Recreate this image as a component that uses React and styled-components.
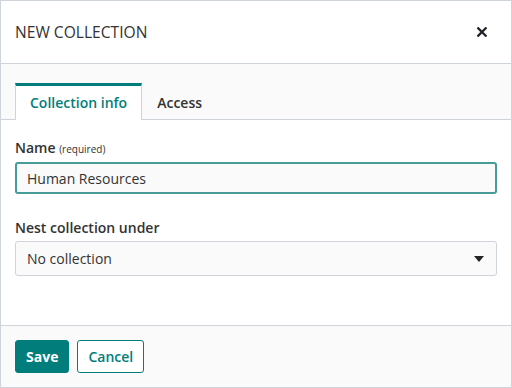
import React from "react";
import styled, { createGlobalStyle } from "styled-components";

const GlobalStyle = createGlobalStyle`
  html, body {
    margin: 0;
    padding: 0;
    background: #fff;
  }
  body {
    font-family: "Open Sans", "Liberation Sans", sans-serif;
    color: #333;
  }
  * { box-sizing: border-box; }
`;

const Modal = styled.div`
  width: 512px;
  height: 388px;
  border: 1px solid #ced4da;
  display: flex;
  flex-direction: column;
  background: #fff;
`;

const Header = styled.div`
  height: 63px;
  flex: none;
  display: flex;
  align-items: center;
  justify-content: space-between;
  padding: 0 23px 0 14px;
  border-bottom: 1px solid #ced4da;
`;

const Title = styled.h1`
  margin: 0;
  font-size: 15.6px;
  font-weight: 400;
  color: #333;
`;

const CloseButton = styled.button`
  border: none;
  background: none;
  padding: 0;
  width: 12px;
  height: 12px;
  display: flex;
  align-items: center;
  justify-content: center;
  color: #212529;
  cursor: pointer;
`;

const TabBar = styled.div`
  flex: none;
  background: #fafafa;
  border-bottom: 1px solid #ced4da;
  padding: 19px 14px 0;
  display: flex;
  height: 56px;
`;

const Tab = styled.div`
  padding: 0 14px 2px;
  display: flex;
  align-items: center;
  font-size: 14px;
  font-weight: 600;
  color: ${(p) => (p.$active ? "#017e7c" : "#333")};
  background: ${(p) => (p.$active ? "#fff" : "transparent")};
  border: 1px solid ${(p) => (p.$active ? "#ced4da" : "transparent")};
  border-top: 3px solid ${(p) => (p.$active ? "#017e7c" : "transparent")};
  border-bottom: none;
  margin-bottom: -1px;
`;

const Body = styled.div`
  flex: 1;
  padding: 18px 14px 0;
`;

const Field = styled.div`
  margin-bottom: 24px;
`;

const Label = styled.label`
  display: block;
  font-size: 14px;
  font-weight: 600;
  color: #333;
  margin-bottom: 3px;
  line-height: 20px;
`;

const Hint = styled.small`
  font-size: 10px;
  font-weight: 400;
  color: #333;
`;

const TextInput = styled.input`
  display: block;
  width: 482px;
  height: 32px;
  padding: 0 10px;
  font-family: inherit;
  font-size: 14px;
  color: #333;
  background: #fafafa;
  border: 2px solid #479b98;
  border-radius: 3px;
  outline: none;
`;

const Select = styled.div`
  width: 482px;
  height: 35px;
  padding: 0 12px 0 11px;
  display: flex;
  align-items: center;
  justify-content: space-between;
  font-size: 14px;
  color: #333;
  background: #fafafa;
  border: 1px solid #ced4da;
  border-radius: 3px;
`;

const Footer = styled.div`
  flex: none;
  height: 62px;
  background: #fafafa;
  border-top: 1px solid #ced4da;
  display: flex;
  align-items: center;
  gap: 8px;
  padding: 0 14px 0;
`;

const Button = styled.button`
  height: 33px;
  padding: 0 10px;
  font-family: inherit;
  font-size: 14px;
  border-radius: 3px;
  border: 1px solid #017e7c;
  background: ${(p) => (p.$primary ? "#017e7c" : "#fff")};
  color: ${(p) => (p.$primary ? "#fff" : "#017e7c")};
  font-weight: ${(p) => (p.$primary ? 700 : 600)};
  cursor: pointer;
`;

export default function App() {
  return (
    <>
      <GlobalStyle />
      <Modal>
        <Header>
          <Title>NEW COLLECTION</Title>
          <CloseButton aria-label="Close">
            <svg width="10" height="10" viewBox="0 0 10 10">
              <path
                d="M1.3 1.3l7.4 7.4M8.7 1.3l-7.4 7.4"
                stroke="currentColor"
                strokeWidth="2.3"
                strokeLinecap="square"
              />
            </svg>
          </CloseButton>
        </Header>

        <TabBar>
          <Tab $active>Collection info</Tab>
          <Tab>Access</Tab>
        </TabBar>

        <Body>
          <Field>
            <Label>
              Name <Hint>(required)</Hint>
            </Label>
            <TextInput defaultValue="Human Resources" />
          </Field>
          <Field>
            <Label>Nest collection under</Label>
            <Select>
              <span>No collection</span>
              <svg width="10" height="6" viewBox="0 0 10 6">
                <path d="M0 0h10L5 6z" fill="#212529" />
              </svg>
            </Select>
          </Field>
        </Body>

        <Footer>
          <Button $primary>Save</Button>
          <Button>Cancel</Button>
        </Footer>
      </Modal>
    </>
  );
}
